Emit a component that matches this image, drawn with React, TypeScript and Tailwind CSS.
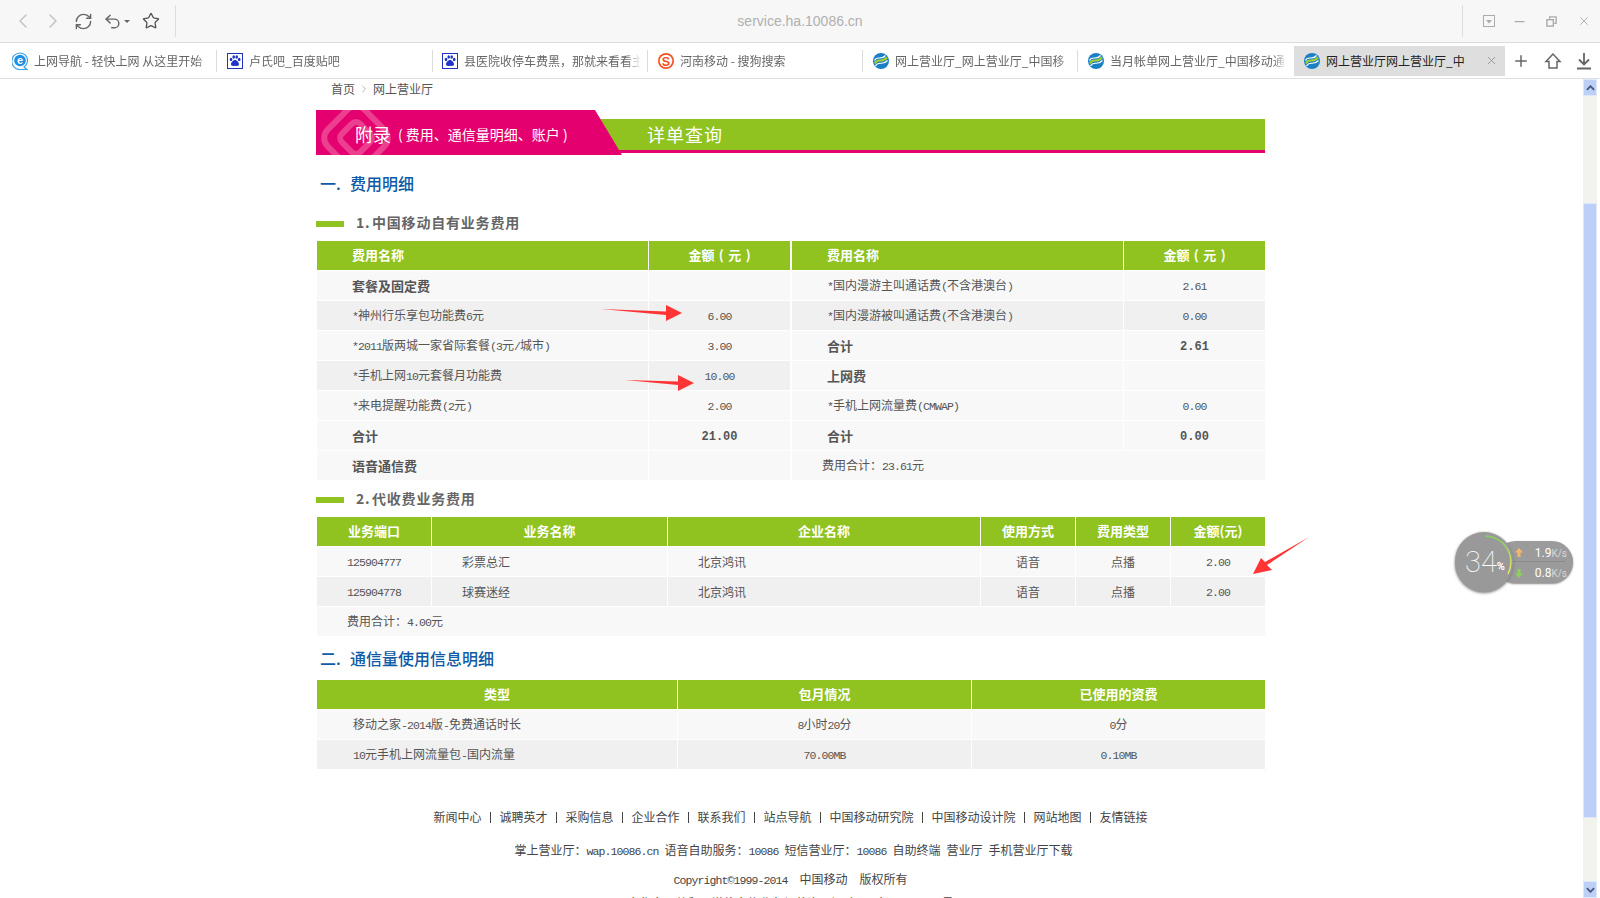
import { ChevronLeft, ChevronRight, Minus, Plus, RefreshCw, Star, Undo2, X } from "lucide-react";
import type { ReactNode } from "react";

// SimSun's half-width latin is 6px per char, Liberation Mono squeezed gets there
const L = ({ children }: { children: ReactNode }) => (
  <span className="font-['Liberation_Mono',monospace] text-[11.5px] tracking-[-0.9px]">{children}</span>
);

const IeIcon = () => (
  <svg viewBox="0 0 16 18" className="w-4 h-[18px] shrink-0">
    <path d="M8 1a7.5 7.5 0 0 1 7.5 7.5c0 3-1.5 5-3.5 6.500l3 2.500H8A7.500 7.500 0 0 1 8 1z" fill="#fff" stroke="#3aa0ea" strokeWidth="1.200" />
    <circle cx="8" cy="8.500" r="5.800" fill="#1e8fe6" />
    <text x="8" y="12" textAnchor="middle" fontSize="11" fontWeight="700" fill="#fff" fontFamily="Liberation Sans, sans-serif">e</text>
  </svg>
);

const PawIcon = () => (
  <svg viewBox="0 0 16 16" className="w-4 h-4 shrink-0">
    <rect x="0.500" y="0.500" width="15" height="15" fill="#fff" stroke="#2133b8" />
    <g fill="#2133c8">
      <ellipse cx="4" cy="6.500" rx="1.300" ry="1.800" />
      <ellipse cx="6.700" cy="4" rx="1.300" ry="1.800" />
      <ellipse cx="9.700" cy="4" rx="1.300" ry="1.800" />
      <ellipse cx="12.200" cy="6.500" rx="1.300" ry="1.800" />
      <path d="M8 7c-2 0-4 2.500-4 4.300C4 13 5.500 13.200 8 12.800c2.500.4 4 .2 4-1.500C12 9.500 10 7 8 7z" />
    </g>
  </svg>
);

const SogouIcon = () => (
  <svg viewBox="0 0 16 16" className="w-4 h-4 shrink-0">
    <circle cx="8" cy="8" r="8" fill="#f4511e" />
    <circle cx="8" cy="8" r="6.300" fill="#fff" />
    <text x="8" y="12.500" textAnchor="middle" fontSize="12.500" fontWeight="700" fill="#f4511e" fontFamily="Liberation Sans, sans-serif">S</text>
  </svg>
);

const MobileIcon = () => (
  <svg viewBox="0 0 16 16" className="w-4 h-4 shrink-0">
    <circle cx="8" cy="8" r="8" fill="#1b7fc4" />
    <path d="M2 10.500C5 4 8 11 14 4.500" fill="none" stroke="#a5cf2c" strokeWidth="2.200" />
    <path d="M2.500 13C6 7 9 13.500 14.500 7.500" fill="none" stroke="#fff" strokeWidth="1.200" />
    <path d="M1.500 7.500C4 2 8 8 12.500 2.500" fill="none" stroke="#fff" strokeWidth="1.200" />
  </svg>
);

const tabs = [
  { icon: <IeIcon />, title: "上网导航 - 轻快上网 从这里开始", width: "w-[217px]", pad: "pl-[12px]" },
  { icon: <PawIcon />, title: "卢氏吧_百度贴吧", width: "w-[216px]", pad: "pl-[10px]" },
  { icon: <PawIcon />, title: "县医院收停车费黑，那就来看看主", width: "w-[215px]", pad: "pl-[9px]" },
  { icon: <SogouIcon />, title: "河南移动 - 搜狗搜索", width: "w-[215px]", pad: "pl-[10px]" },
  { icon: <MobileIcon />, title: "网上营业厅_网上营业厅_中国移", width: "w-[215px]", pad: "pl-[10px]" },
  { icon: <MobileIcon />, title: "当月帐单网上营业厅_中国移动通", width: "w-[216px]", pad: "pl-[10px]" },
];

const Toolbar = () => (
  <div className="h-[43px] bg-[#f7f7f7] border-b border-[#dcdcdc] flex items-center relative shrink-0">
    <div className="flex items-center w-[176px] border-r border-[#dedede] h-[32px]">
      <ChevronLeft className="ml-[11px] text-[#c4c4c4]" size={24} strokeWidth={1.500} />
      <ChevronRight className="ml-[6px] text-[#c4c4c4]" size={24} strokeWidth={1.500} />
      <RefreshCw className="ml-[9px] text-[#666]" size={19} strokeWidth={1.800} />
      <Undo2 className="ml-[10px] text-[#666]" size={19} strokeWidth={1.800} />
      <span className="ml-[2px] w-0 h-0 border-x-[3px] border-x-transparent border-t-[3px] border-t-[#666]" />
      <Star className="ml-[12px] text-[#555]" size={18} strokeWidth={1.800} />
    </div>
    <div className="flex-1 pr-[38px] text-center text-[14px] text-[#b0b0b0] font-['Liberation_Sans',sans-serif]">service.ha.10086.cn</div>
    <div className="flex items-center w-[138px] h-[32px] border-l border-[#dedede] text-[#aaa]">
      <svg viewBox="0 0 12 12" className="w-3 h-3 ml-[20px]" fill="none" stroke="#aaa">
        <rect x="0.500" y="0.500" width="11" height="11" />
        <path d="M3 5h6L6 8.500z" fill="#aaa" stroke="none" />
      </svg>
      <Minus className="ml-[17px]" size={15} strokeWidth={2} />
      <svg viewBox="0 0 12 12" className="w-[11px] h-[11px] ml-[19px]" fill="none" stroke="#aaa" strokeWidth="1.500">
        <rect x="1" y="4" width="7" height="7" />
        <path d="M4 3V1h7v7H9" />
      </svg>
      <X className="ml-[20px]" size={14} strokeWidth={1.500} />
    </div>
  </div>
);

const TabBar = () => (
  <div className="h-[36px] bg-white border-b border-[#e0e0e0] flex items-center shrink-0">
    {tabs.map((t, i) => (
      <div key={t.title} className={`${t.width} ${t.pad} h-[22px] flex items-center gap-[6px] ${i < 5 ? "border-r border-[#dcdcdc]" : ""}`}>
        {t.icon}
        <span className="w-[177px] overflow-hidden whitespace-nowrap text-[12px] text-[#666] [mask-image:linear-gradient(to_right,#000_92%,transparent)]">{t.title}</span>
      </div>
    ))}
    <div className="w-[211px] h-[30px] bg-[#dedede] flex items-center pl-[10px] gap-[6px]">
      <MobileIcon />
      <span className="w-[150px] overflow-hidden whitespace-nowrap text-[12px] text-[#222]">网上营业厅网上营业厅_中</span>
      <X className="ml-[3px] text-[#999]" size={13} strokeWidth={1.800} />
    </div>
    <Plus className="ml-[7px] text-[#666]" size={18} strokeWidth={2} />
    <svg viewBox="0 0 18 18" className="w-[18px] h-[18px] ml-[14px]" fill="none" stroke="#666" strokeWidth="1.500">
      <path d="M9 2 2 9.500h3V16h8V9.500h3z" />
    </svg>
    <svg viewBox="0 0 18 18" className="w-[18px] h-[18px] ml-[13px]" fill="none" stroke="#666" strokeWidth="1.800">
      <path d="M9 1v11M4 7.500 9 12.500l5-5M2 16.500h14" />
    </svg>
  </div>
);

const Banner = () => (
  <div className="relative h-[45px]">
    <div className="absolute left-0 top-0 w-[306px] h-[45px] bg-[#e4006f] overflow-hidden [clip-path:polygon(0_0,279px_0,306px_100%,0_100%)] z-10 flex items-center pl-[39px] pt-[3px] text-white">
      <svg viewBox="0 0 100 45" className="absolute left-0 top-0 w-[100px] h-[45px]" fill="none" stroke="#ec3f90" strokeWidth="6">
        <rect x="14" y="2" width="52" height="52" rx="12" transform="rotate(45 40 28)" />
        <rect x="27" y="15" width="26" height="26" rx="6" transform="rotate(45 40 28)" />
      </svg>
      <span className="relative text-[18px]">附录</span>
      <span className="relative text-[14px] ml-[7px]">( 费用、通信量明细、账户 )</span>
    </div>
    <div className="absolute left-[284px] right-0 top-[9px] h-[31px] bg-[#90c31f] [clip-path:polygon(0_0,100%_0,100%_100%,18px_100%)] flex items-center pl-[47px]">
      <span className="text-[18px] text-white tracking-[1px] pb-[1px]">详单查询</span>
    </div>
    <div className="absolute left-[300px] right-0 top-[40px] h-[3px] bg-[#e4006f]" />
  </div>
);

const Title = ({ n, children }: { n: string; children: ReactNode }) => (
  <div className="h-[20px] flex items-center text-[#0f5aa6] text-[16px] font-medium pl-[4px]">
    <span className="w-[30px]">{n}.</span>
    {children}
  </div>
);

const SubTitle = ({ n, children }: { n: string; children: ReactNode }) => (
  <div className="h-[20px] flex items-center">
    <span className="w-[28px] h-[6px] bg-[#90c31f]" />
    <span className="ml-[12px] pb-[3px] text-[14px] tracking-[0.8px] font-bold text-[#666]">
      <span className="inline-block w-[16px]">{n}.</span>
      {children}
    </span>
  </div>
);

const th = "h-[30px] p-0 pb-[2px] bg-[#90c31f] border-r border-b border-white last:border-r-0 text-white font-bold text-[13px] text-center";
const td = "h-[30px] p-0 bg-[#f8f8f8] border-r border-b border-white last:border-r-0 text-[12px] text-[#555] text-center";
const tdDark = "h-[30px] p-0 bg-[#f0f0f0] border-r border-b border-white last:border-r-0 text-[12px] text-[#555] text-center";

type FeeRow = { name: ReactNode; amount?: ReactNode; total?: boolean; dark?: boolean };

const leftRows: FeeRow[] = [
  { name: "套餐及固定费", total: true },
  { name: <><L>*</L>神州行乐享包功能费<L>6</L>元</>, amount: "6.00", dark: true },
  { name: <><L>*2011</L>版两城一家省际套餐<L>(3</L>元<L>/</L>城市<L>)</L></>, amount: "3.00" },
  { name: <><L>*</L>手机上网<L>10</L>元套餐月功能费</>, amount: "10.00", dark: true },
  { name: <><L>*</L>来电提醒功能费<L>(2</L>元<L>)</L></>, amount: "2.00" },
  { name: "合计", amount: "21.00", total: true },
];

const rightRows: FeeRow[] = [
  { name: <><L>*</L>国内漫游主叫通话费<L>(</L>不含港澳台<L>)</L></>, amount: "2.61" },
  { name: <><L>*</L>国内漫游被叫通话费<L>(</L>不含港澳台<L>)</L></>, amount: "0.00", dark: true },
  { name: "合计", amount: "2.61", total: true },
  { name: "上网费", total: true },
  { name: <><L>*</L>手机上网流量费<L>(CMWAP)</L></>, amount: "0.00" },
  { name: "合计", amount: "0.00", total: true },
];

const FeeCells = ({ row, gap }: { row: FeeRow; gap?: boolean }) => {
  const base = row.dark ? tdDark : td;
  return (
    <>
      <td className={`${base} !text-left pl-[35px] ${row.total ? "font-bold !text-[13px]" : ""}`}>{row.name}</td>
      <td className={`${base} ${row.total ? "font-bold font-['Liberation_Mono',monospace] pt-[2px]" : ""} ${gap ? "border-r-2" : ""}`}>
        {row.total ? row.amount : row.amount && <L>{row.amount}</L>}
      </td>
    </>
  );
};

const FeeTable = () => (
  <table className="ml-[1px] w-[948px] table-fixed border-separate border-spacing-0">
    <colgroup>
      <col className="w-[332px]" />
      <col className="w-[143px]" />
      <col className="w-[332px]" />
      <col className="w-[141px]" />
    </colgroup>
    <thead>
      <tr>
        <th className={`${th} !text-left pl-[35px]`}>费用名称</th>
        <th className={`${th} border-r-2 [word-spacing:1.500px]`}>金额 ( 元 )</th>
        <th className={`${th} !text-left pl-[35px]`}>费用名称</th>
        <th className={`${th} [word-spacing:1.500px]`}>金额 ( 元 )</th>
      </tr>
    </thead>
    <tbody>
      {leftRows.map((row, i) => (
        <tr key={i}>
          <FeeCells row={row} gap />
          <FeeCells row={rightRows[i]} />
        </tr>
      ))}
      <tr>
        <td className={`${td} !text-left pl-[35px] font-bold !text-[13px]`}>语音通信费</td>
        <td className={`${td} border-r-2`} />
        <td colSpan={2} className={`${td} !text-left pl-[30px]`}>费用合计：<L>23.61</L>元</td>
      </tr>
    </tbody>
  </table>
);

const agencyRows = [
  { port: "125904777", name: "彩票总汇" },
  { port: "125904778", name: "球赛迷经" },
];

const AgencyTable = () => (
  <table className="ml-[1px] w-[948px] table-fixed border-separate border-spacing-0">
    <colgroup>
      <col className="w-[115px]" />
      <col className="w-[236px]" />
      <col className="w-[313px]" />
      <col className="w-[95px]" />
      <col className="w-[95px]" />
      <col className="w-[94px]" />
    </colgroup>
    <thead>
      <tr>
        {["业务端口", "业务名称", "企业名称", "使用方式", "费用类型", "金额(元)"].map((h) => (
          <th key={h} className={th}>{h}</th>
        ))}
      </tr>
    </thead>
    <tbody>
      {agencyRows.map((r, i) => {
        const c = i === 1 ? tdDark : td;
        return (
          <tr key={r.port}>
            <td className={c}><L>{r.port}</L></td>
            <td className={`${c} !text-left pl-[30px]`}>{r.name}</td>
            <td className={`${c} !text-left pl-[30px]`}>北京鸿讯</td>
            <td className={c}>语音</td>
            <td className={c}>点播</td>
            <td className={c}><L>2.00</L></td>
          </tr>
        );
      })}
      <tr>
        <td colSpan={6} className={`${td} !text-left pl-[30px]`}>费用合计：<L>4.00</L>元</td>
      </tr>
    </tbody>
  </table>
);

const UsageTable = () => (
  <table className="ml-[1px] w-[948px] table-fixed border-separate border-spacing-0">
    <colgroup>
      <col className="w-[361px]" />
      <col className="w-[294px]" />
      <col className="w-[293px]" />
    </colgroup>
    <thead>
      <tr>
        {["类型", "包月情况", "已使用的资费"].map((h) => (
          <th key={h} className={th}>{h}</th>
        ))}
      </tr>
    </thead>
    <tbody>
      <tr>
        <td className={`${td} !text-left pl-[36px]`}>移动之家<L>-2014</L>版<L>-</L>免费通话时长</td>
        <td className={td}><L>8</L>小时<L>20</L>分</td>
        <td className={td}><L>0</L>分</td>
      </tr>
      <tr>
        <td className={`${tdDark} !text-left pl-[36px]`}><L>10</L>元手机上网流量包<L>-</L>国内流量</td>
        <td className={tdDark}><L>70.00MB</L></td>
        <td className={tdDark}><L>0.10MB</L></td>
      </tr>
    </tbody>
  </table>
);

const footerLinks = ["新闻中心", "诚聘英才", "采购信息", "企业合作", "联系我们", "站点导航", "中国移动研究院", "中国移动设计院", "网站地图", "友情链接"];

const Footer = () => (
  <div className="text-center text-[12px] text-[#444]">
    <div className="mt-[37px] h-[20px] flex items-center justify-center">
      {footerLinks.map((l, i) => (
        <span key={l} className="flex items-center">
          {i > 0 && <span className="w-px h-[11px] bg-[#444] mx-[8.500px]" />}
          {l}
        </span>
      ))}
    </div>
    <div className="mt-[13px] h-[20px] leading-[20px] pl-[6px]">
      掌上营业厅：<L>wap.10086.cn&nbsp;</L>语音自助服务：<L>10086&nbsp;</L>短信营业厅：<L>10086&nbsp;</L>自助终端<L>&nbsp;</L>营业厅<L>&nbsp;</L>手机营业厅下载
    </div>
    <div className="mt-[9px] h-[20px] leading-[20px]">
      <L>Copyright©1999-2014&nbsp;&nbsp;</L>中国移动<L>&nbsp;&nbsp;</L>版权所有
    </div>
    <div className="mt-[4px] h-[20px] leading-[20px]">中华人民共和国增值电信业务经营许可证 京ICP备05002571号</div>
  </div>
);

const ScrollBar = () => (
  <div className="w-[17px] pr-[3px] flex flex-col shrink-0 bg-white">
    <div className="h-[17px] bg-[#bccff7] border border-[#dfe8fb] flex items-center justify-center">
      <svg viewBox="0 0 10 6" className="w-[9px] h-[6px]" fill="none" stroke="#44557a" strokeWidth="2"><path d="M1 5l4-4 4 4" /></svg>
    </div>
    <div className="h-[107px] bg-[#f3f3ee]" />
    <div className="h-[615px] bg-[#bccff7] border border-[#dfe8fb]" />
    <div className="flex-1 bg-[#f3f3ee]" />
    <div className="h-[17px] bg-[#bccff7] border border-[#dfe8fb] flex items-center justify-center">
      <svg viewBox="0 0 10 6" className="w-[9px] h-[6px]" fill="none" stroke="#44557a" strokeWidth="2"><path d="M1 1l4 4 4-4" /></svg>
    </div>
  </div>
);

const SpeedWidget = () => (
  <div className="absolute left-[1455px] top-[453px] w-[118px] h-[60px] font-['Roboto',sans-serif] text-white">
    <div className="absolute left-[40px] top-[9px] right-0 h-[42px] rounded-full bg-[#9b9b9b] shadow-[0_1px_2px_#888]">
      <div className="absolute left-[18px] right-[8px] top-[20px] h-px bg-[#8a8a8a]" />
      <svg viewBox="0 0 8 9" className="absolute left-[20px] top-[7px] w-2 h-[9px]" fill="#f5b56a"><path d="M4 0l4 4.500H5.500V9h-3V4.500H0z" /></svg>
      <svg viewBox="0 0 8 9" className="absolute left-[20px] top-[28px] w-2 h-[9px]" fill="#8fd05a"><path d="M4 9l4-4.500H5.500V0h-3v4.500H0z" /></svg>
      <span className="absolute right-[6px] top-[3px] text-[12px] whitespace-nowrap">1.9<span className="text-[10px] text-[#d8d8d8]">K/s</span></span>
      <span className="absolute right-[6px] top-[23px] text-[12px] whitespace-nowrap">0.8<span className="text-[10px] text-[#d8d8d8]">K/s</span></span>
    </div>
    <div className="absolute left-0 top-0 w-[58px] h-[60px] rounded-full bg-[#999] shadow-[0_1px_3px_#777] flex items-center justify-center pl-[2px]">
      <svg viewBox="0 0 58 60" className="absolute inset-0 w-[58px] h-[60px]" fill="none" strokeWidth="1.500">
        <defs>
          <linearGradient id="arc" x1="0" y1="0" x2="0" y2="1">
            <stop offset="0" stopColor="#7fd35a" />
            <stop offset="1" stopColor="#f2e36a" />
          </linearGradient>
        </defs>
        <path d="M30 4a26 26 0 0 1 23 38" stroke="url(#arc)" />
      </svg>
      <span className="text-[29px] font-thin leading-none">34</span>
      <span className="text-[11px] font-bold self-end mb-[17px]">%</span>
    </div>
  </div>
);

const RedArrows = () => (
  <>
    <svg viewBox="0 0 82 17" className="absolute left-[600px] top-[226px] w-[82px] h-[17px]">
      <path d="M1 4 66 6.500V0L82 8 66 16v-6z" fill="#ff3535" />
    </svg>
    <svg viewBox="0 0 69 17" className="absolute left-[625px] top-[296px] w-[69px] h-[17px]">
      <path d="M0 5 53 6.500V0L69 8 53 16v-6z" fill="#ff3535" />
    </svg>
    <svg viewBox="0 0 57 38" className="absolute left-[1253px] top-[458px] w-[57px] h-[38px]">
      <path d="M56 0 14 28l5 5-19 4 8-16 4 4z" fill="#ff3535" />
    </svg>
  </>
);

export default function App() {
  return (
    <div className="h-[898px] w-[1600px] overflow-hidden flex flex-col bg-white font-['Noto_Sans_CJK_SC',sans-serif]">
      <Toolbar />
      <TabBar />
      <div className="flex-1 min-h-0 flex relative">
        <main className="flex-1 min-w-0 overflow-hidden">
          <div className="ml-[316px] w-[949px]">
            <div className="h-[31px] pt-[1px] pl-[15px] text-[12px] text-[#555] flex items-start">
              首页
              <ChevronRight className="mx-[3px] mt-[3px] text-[#888]" size={12} strokeWidth={1.200} />
              网上营业厅
            </div>
            <Banner />
            <div className="mt-[18px]"><Title n="一">费用明细</Title></div>
            <div className="mt-[21px] mb-[7px]"><SubTitle n="1">中国移动自有业务费用</SubTitle></div>
            <FeeTable />
            <div className="mt-[9px] mb-[7px]"><SubTitle n="2">代收费业务费用</SubTitle></div>
            <AgencyTable />
            <div className="mt-[11px] mb-[12px]"><Title n="二">通信量使用信息明细</Title></div>
            <UsageTable />
            <Footer />
          </div>
        </main>
        <ScrollBar />
        <RedArrows />
        <SpeedWidget />
      </div>
    </div>
  );
}
